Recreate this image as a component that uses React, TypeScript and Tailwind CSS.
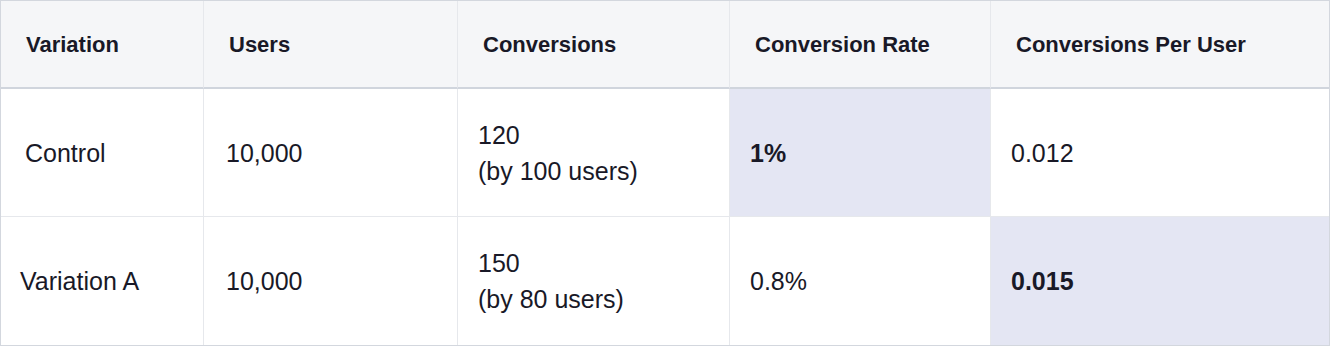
import React from 'react';

type Cell = { text: React.ReactNode; bold?: boolean; hl?: boolean; pl?: string };

const headers = ['Variation', 'Users', 'Conversions', 'Conversion Rate', 'Conversions Per User'];

const rows: Cell[][] = [
  [
    { text: 'Control', pl: 'pl-[24px]' },
    { text: '10,000', pl: 'pl-[22px]' },
    { text: <>120<br />(by 100 users)</> },
    { text: '1%', bold: true, hl: true },
    { text: '0.012' },
  ],
  [
    { text: 'Variation A', pl: 'pl-[19px]' },
    { text: '10,000', pl: 'pl-[22px]' },
    { text: <>150<br />(by 80 users)</> },
    { text: '0.8%' },
    { text: '0.015', bold: true, hl: true },
  ],
];

export default function App() {
  return (
    <main className="w-[1330px] h-[346px] bg-white" style={{ fontFamily: '"Liberation Sans", Arial, sans-serif' }}>
      <div className="grid grid-cols-[202px_254px_272px_261px_1fr] border border-[#d3d7de] text-[#191927]">
        {headers.map((h, i) => (
          <div
            key={h}
            className={`h-[88px] flex items-center pl-[25px] bg-[#f5f6f8] border-b-2 border-b-[#d0d5dd] text-[22px] font-bold ${i > 0 ? 'border-l border-l-[#e6e8ec]' : ''}`}
          >
            {h}
          </div>
        ))}
        {rows.map((row, r) =>
          row.map((c, i) => (
            <div
              key={`${r}-${i}`}
              className={`h-[128px] flex items-center text-[25px] leading-[36px] ${c.pl ?? 'pl-[20px]'} ${i > 0 ? 'border-l border-l-[#e6e8ec]' : ''} ${r === 0 ? 'border-b border-b-[#e6e8ec]' : ''} ${c.hl ? 'bg-[#e4e6f3]' : ''} ${c.bold ? 'font-bold' : ''}`}
            >
              <div>{c.text}</div>
            </div>
          ))
        )}
      </div>
    </main>
  );
}
